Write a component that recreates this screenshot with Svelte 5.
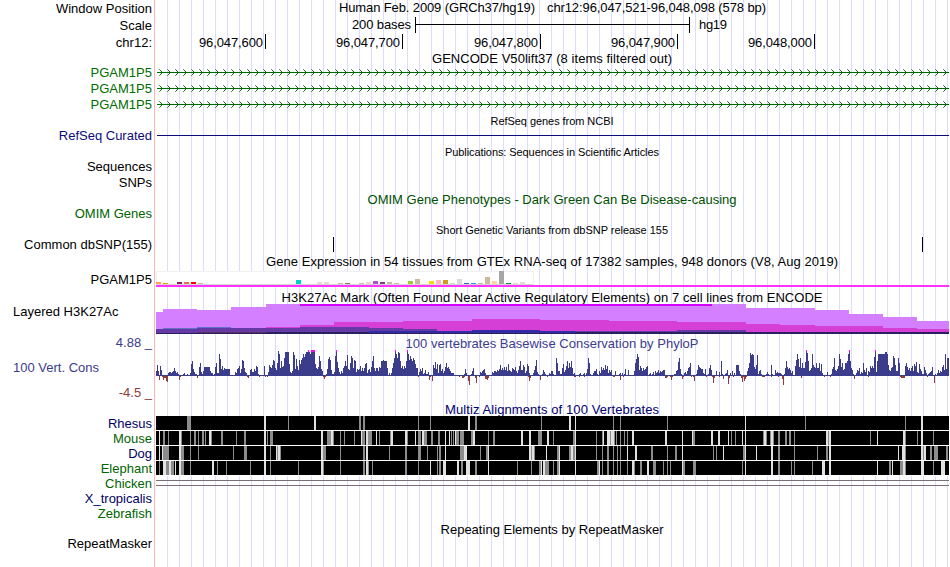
<script>
  const LEFT = 156
  const WIDTH = 793
  const RIGHT = LEFT + WIDTH

  const green = '#006400'
  const navy = '#0c0c78'
  const blue = '#3c3c8c'

  // heights add up from the top of the page, see layout()
  const tracks = layout([
    { h: 17, label: 'Window Position', kind: 'position' },
    { h: 17, label: 'Scale', kind: 'scale' },
    { h: 17, label: 'chr12:', kind: 'ruler' },
    { h: 13, title: 'GENCODE V50lift37 (8 items filtered out)', base: 63, len: 240 },
    { h: 16, line: 18, label: 'PGAM1P5', color: '#006e00', kind: 'gene' },
    { h: 16, line: 18, label: 'PGAM1P5', color: '#006e00', kind: 'gene' },
    { h: 16, line: 18, label: 'PGAM1P5', color: '#006e00', kind: 'gene' },
    { h: 15, title: 'RefSeq genes from NCBI', base: 125, len: 123, small: true },
    { h: 16, line: 18, label: 'RefSeq Curated', color: navy, kind: 'line' },
    { h: 16, title: 'Publications: Sequences in Scientific Articles', base: 156, len: 214, small: true },
    { h: 16, label: 'Sequences' },
    { h: 15, label: 'SNPs' },
    { h: 16, title: 'OMIM Gene Phenotypes - Dark Green Can Be Disease-causing', base: 204, len: 369, color: '#005000' },
    { h: 15, label: 'OMIM Genes', color: green },
    { h: 16, title: 'Short Genetic Variants from dbSNP release 155', base: 234, len: 232, small: true },
    { h: 15, label: 'Common dbSNP(155)', kind: 'snps' },
    { h: 19, title: 'Gene Expression in 54 tissues from GTEx RNA-seq of 17382 samples, 948 donors (V8, Aug 2019)', base: 266, len: 572 },
    { h: 17, label: 'PGAM1P5', kind: 'gtex' },
    { h: 15, title: 'H3K27Ac Mark (Often Found Near Active Regulatory Elements) on 7 cell lines from ENCODE', base: 302, len: 541 },
    { h: 32, line: 17, label: 'Layered H3K27Ac', kind: 'h3k', side: 'left' },
    { h: 15, label: '4.88 _', color: blue, title: '100 vertebrates Basewise Conservation by PhyloP', base: 348, len: 293 },
    { h: 35, label: '100 Vert. Cons', color: blue, kind: 'cons', side: 'left' },
    { h: 17, line: 15, label: '-4.5 _', color: '#8c3c3c' },
    { h: 14, title: 'Multiz Alignments of 100 Vertebrates', base: 414, len: 214, color: '#00006e' },
    { h: 15, label: 'Rhesus', color: '#000064', kind: 'align' },
    { h: 15, label: 'Mouse', color: green, kind: 'align' },
    { h: 15, label: 'Dog', color: '#000064', kind: 'align' },
    { h: 15, label: 'Elephant', color: green, kind: 'align' },
    { h: 15, label: 'Chicken', color: green, kind: 'gap' },
    { h: 15, label: 'X_tropicalis', color: '#000064' },
    { h: 15, label: 'Zebrafish', color: green },
    { h: 15, title: 'Repeating Elements by RepeatMasker', base: 534, len: 223 },
    { h: 15, label: 'RepeatMasker' }
  ])

  function layout(list) {
    let top = 0
    return list.map((t) => {
      const row = { label: '', side: 'right', color: '#000', line: t.h, ...t, top }
      top += t.h
      return row
    })
  }

  const ruler = [
    [265, '96,047,600'],
    [402, '96,047,700'],
    [540, '96,047,800'],
    [677, '96,047,900'],
    [814, '96,048,000']
  ]

  const arrows = Array.from({ length: 99 }, (_, i) => 159 + i * 8)

  // x, height, tissue colour
  const tissues = [
    [156, 2, '#ffa54f'], [163, 1, '#ee9a00'], [177, 2, '#8b1c62'], [184, 2, '#ee6a50'],
    [191, 2, '#ff0000'], [198, 1, '#cdb79e'], [296, 4, '#00cdcd'], [317, 2, '#eed5d2'],
    [324, 2, '#eed5d2'], [338, 1, '#cdb79e'], [345, 1, '#8b7355'], [359, 1, '#cdb79e'],
    [366, 2, '#eed5d2'], [373, 3, '#b452cd'], [380, 2, '#7a378b'], [387, 2, '#cdb79e'],
    [394, 1, '#cdb79e'], [408, 3, '#9acd32'], [415, 5, '#cdb79e'], [429, 3, '#ffd700'],
    [436, 4, '#ffb6c1'], [443, 4, '#cd9b1d'], [450, 1, '#b4eeb4'], [457, 5, '#d9d9d9'],
    [464, 1, '#3a5fcd'], [471, 1, '#1e90ff'], [478, 1, '#cdb79e'], [485, 7, '#cdb79e'],
    [492, 3, '#ffd39b'], [499, 13, '#a6a6a6'], [506, 1, '#008b45'], [513, 1, '#eed5d2'],
    [520, 2, '#eed5d2']
  ]

  // each layer is a list of steps: x where the step starts, y of its top
  const layers = [
    { fill: '#d47fff', steps: [[156, 312], [163, 309], [197, 310], [231, 307], [266, 304], [746, 308], [815, 310], [849, 314], [883, 317], [917, 321]] },
    { fill: '#d53fd5', steps: [[156, 333], [266, 327], [300, 325], [334, 322], [403, 321], [472, 319], [540, 320], [609, 321], [677, 322], [746, 324], [780, 325], [815, 326], [883, 328], [917, 329]] },
    { fill: '#5f72c4', steps: [[156, 333], [163, 328], [197, 327], [231, 333]] },
    { fill: '#653aa5', steps: [[156, 329], [197, 328], [231, 328], [266, 328], [300, 327], [369, 328], [403, 329], [437, 331], [609, 331], [677, 330], [746, 332]] },
    { fill: '#332aa5', steps: [[156, 333], [369, 331], [472, 330], [540, 331], [575, 333]] },
    { fill: '#2a2060', steps: [[156, 333], [197, 332], [369, 333], [575, 332]] }
  ]

  function stepPath(steps) {
    let d = `M${LEFT} 334`
    steps.forEach(([x, y], i) => {
      const next = i + 1 < steps.length ? steps[i + 1][0] : RIGHT
      d += `L${x} ${y}L${next} ${y}`
    })
    return d + `L${RIGHT} 334Z`
  }

  // one base-36 digit per pixel; q is a bar that goes past the top
  const chunks = [
    [156, '5b51a61111113443458534211112311211'],
    [190, '3cf7422119d42599999953312'],
    [214, '29d33mh7a687777711111437'],
    [238, '8a37gf843111674475a9211111a1113'],
    [268, '4b98bgf86dpm8f9aiooooc435ol7ha6gcgimjmooqomqqqqc8'],
    [317, '79kf75111'],
    [326, '27hjg6224kqe842538afal76dki8gf4767a58'],
    [363, '58cd36749fk858859'],
    [380, '8ffgfff813138diqmionf8a7a8fqmg'],
    [410, 'khfigc88147582362241111b8e7c3bc57359d89753331111111111273111'],
    [471, '25811111143567311111143554657b6869695c6548769536af66b935ca3111'],
    [532, '136ag4211126421113255211id55228c46af8d9f8231111231123111'],
    [586, '37id211355721539686b7a3646111511123131271161111'],
    [634, '5dhmj6a858679a12312415346354566111111111'],
    [674, '2256ei72113425'],
    [688, '89d1111126b98773271128b611115114'],
    [720, '1f2112361131513'],
    [735, '1bbb521111115'],
    [748, '8dnlml97bl25621111242'],
    [769, '11b2116343332'],
    [782, '1128f97863511'],
    [795, 'agmh9i8d88eqnf568mb98d88d5c31111411'],
    [830, '1279i657amh9d67ddfmqf8621136582'],
    [861, '43d64815'],
    [869, '4a8a8jq4fmmmmmmmoomb6589kib55id'],
    [900, '11111ad96858a5cae43c7522963'],
    [927, '123459112136354'],
    [942, '9b6m7ii']
  ]
  const heights = new Map(
    chunks.flatMap(([x, s]) => [...s].map((c, i) => [x + i, parseInt(c, 36)]))
  )

  const dips = [
    [159, 4], [162, 1], [163, 4], [164, 2], [165, 2], [166, 5], [167, 6], [179, 4], [180, 1],
    [197, 2], [247, 1], [248, 2], [259, 1], [265, 1], [267, 1], [323, 1], [324, 3], [325, 1],
    [418, 1], [429, 4], [430, 1], [432, 5], [459, 1], [462, 2], [463, 2], [464, 1], [468, 5],
    [469, 9], [475, 2], [476, 7], [479, 1], [485, 3], [486, 3], [487, 4], [488, 2], [528, 1],
    [529, 5], [530, 2], [540, 4], [547, 1], [574, 1], [575, 1], [579, 1], [584, 1], [613, 1],
    [614, 1], [620, 4], [623, 1], [665, 2], [666, 2], [667, 1], [670, 1], [671, 4], [672, 1],
    [682, 3], [683, 1], [691, 1], [693, 1], [694, 5], [706, 1], [712, 1], [713, 7], [714, 2],
    [719, 1], [723, 3], [728, 8], [729, 2], [733, 1], [741, 2], [742, 6], [743, 1], [744, 5],
    [745, 3], [746, 1], [762, 1], [763, 1], [764, 1], [771, 1], [778, 1], [782, 3], [783, 9],
    [801, 2], [824, 1], [830, 1], [854, 3], [868, 1], [900, 1], [901, 2], [902, 2], [903, 2],
    [904, 2], [927, 1], [934, 7]
  ]

  // x:width, then g (mismatch) or w (missing)
  const alignments = {
    Rhesus:
      '187:4g 264:2w 288:1g 314:2w 359:2g 363:2g 418:1g 430:1g 468:2w 475:2g 541:1g 569:2w 575:1w 613:1g 620:1g 667:1g 745:1w 805:1g 905:1g 921:2w',
    Mouse:
      '159:1w 163:2g 168:1g 179:2w 181:1g 190:1g 194:2g 198:1g 202:2g 205:1g 209:2w 211:1g 221:2g 236:1g 244:2g 264:2w 267:1g 270:3g 321:2w 327:4g 331:2w 333:1g 340:1g 344:1g 354:1g 361:1w 362:3g 366:2w 368:4g 376:1w 379:1g 390:1g 391:2w 405:2w 407:1g 415:1w 418:3g 422:2w 424:3g 431:2g 438:2g 445:1w 449:1w 451:1g 453:1g 455:1w 456:3g 460:4g 471:2g 473:2w 488:1g 493:2g 521:2w 529:2w 538:4g 547:2w 553:1g 573:2g 575:1w 596:1g 602:1g 603:1w 607:3w 610:1g 611:3w 614:1g 616:1g 620:1g 624:1g 627:1g 632:2w 665:2w 682:1w 692:1w 693:2g 711:2w 718:2w 728:1w 731:1g 735:1g 742:1w 745:1w 763:1g 764:2w 766:1g 770:1g 771:2w 773:1g 778:2g 785:2g 789:2g 794:1g 826:2w 828:1g 829:2w 870:1g 877:1w 903:2w 905:1g 917:1g 921:2w 933:1g',
    Dog:
      '159:1w 162:1w 163:6g 179:2w 181:3g 190:1g 198:1g 233:1g 244:3g 264:2w 270:1g 276:1w 277:1g 278:2w 280:1g 321:2w 323:3g 340:1g 363:2g 366:2w 389:1g 405:2g 418:3g 427:1g 437:1g 439:2g 445:1w 460:4g 464:3w 480:1g 486:2g 488:1w 529:2w 531:1g 532:2w 534:1g 546:1w 557:2g 559:1w 569:2g 571:2w 573:2g 575:1w 596:1g 602:1g 607:2g 613:1g 617:1g 620:1g 627:1w 635:2w 651:2g 667:1g 675:2g 682:1w 713:1g 716:1g 723:1w 743:2g 745:1w 756:1w 771:2w 778:2g 794:1g 817:1g 826:2g 829:2w 898:1w 902:3w 905:1g 921:2w 923:1g 924:2w 930:2g 934:4g 946:2g',
    Elephant:
      '159:1g 163:3w 166:3g 169:2w 171:3g 175:1w 179:2w 181:3g 190:1g 212:2w 217:1g 226:1g 250:1g 264:2w 270:1g 298:1g 321:2w 323:1g 340:1g 363:2g 366:2w 368:1g 372:1g 405:2g 418:1g 430:1w 437:1g 439:2g 443:3w 457:2w 461:2g 466:4w 475:2g 488:1w 517:1g 531:1g 539:2g 541:1w 543:2w 545:4g 553:1g 557:2g 559:1w 575:1w 597:2g 599:1w 602:1g 607:2g 613:1g 617:1g 620:1g 627:1g 632:2w 634:1g 640:2g 647:2w 653:3g 663:1g 667:1g 670:1g 682:1w 683:2g 693:3g 742:1g 745:1w 771:2w 778:2g 791:1g 794:1g 812:1g 822:3w 829:2w 877:1w 889:2g 892:1w 900:3g 903:2w 905:1g 921:3w 933:1g 941:4w'
  }

  function parseBlocks(text) {
    return text.split(' ').map((b) => {
      const [x, rest] = b.split(':')
      return { x: +x, w: parseInt(rest), fill: rest.endsWith('g') ? '#8c8c8c' : '#e1e1e1' }
    })
  }
</script>

<div class="browser">
  {#each tracks as t}
    <div class="track" style:height="{t.h}px">
      <div class="label {t.side}" style:color={t.color} style:line-height="{t.line}px">{t.label}</div>
      <svg width={WIDTH} height={t.h} viewBox="{LEFT} {t.top} {WIDTH} {t.h}">
        {#if t.title}
          <text class:small={t.small} x="552" y={t.base} text-anchor="middle" textLength={t.len} fill={t.color}>{t.title}</text>
        {/if}

        {#if t.kind === 'position'}
          <text x="339" y="12" textLength="196">Human Feb. 2009 (GRCh37/hg19)</text>
          <text x="547" y="12" textLength="219">chr12:96,047,521-96,048,098 (578 bp)</text>
        {:else if t.kind === 'scale'}
          <text x="352" y="29" textLength="59">200 bases</text>
          <path d="M415 17h1v7h273v-7h1v16h-1v-8h-273v8h-1z" />
          <text x="699" y="29" textLength="28">hg19</text>
        {:else if t.kind === 'ruler'}
          {#each ruler as [x, text]}
            <text x={x - 66} y="47" textLength="64">{text}</text>
            <rect {x} y="34" width="1" height="15" />
          {/each}
        {:else if t.kind === 'gene'}
          <rect x={LEFT + 1} y={t.top + 8} width={WIDTH - 1} height="1" fill={green} />
          {#each arrows as x}
            {#if x + 3 < RIGHT}
              <path class="tips" d="M{x} {t.top + 5}h1v1h-1zM{x} {t.top + 11}h1v1h-1z" />
              <path class="arrow" d="M{x + 1} {t.top + 6}h1v1h1v1h1v1h-1v1h-1v1h-1v-1h1v-1h1v-1h-1v-1h-1z" />
            {/if}
          {/each}
        {:else if t.kind === 'line'}
          <rect x={LEFT + 1} y="135" width={WIDTH - 1} height="1" fill={navy} />
        {:else if t.kind === 'snps'}
          <rect x="333" y="237" width="1" height="15" />
          <rect x="922" y="237" width="1" height="15" />
        {:else if t.kind === 'gtex'}
          <rect x="156.5" y="271.5" width="377" height="13" fill="#fff" stroke="#f0f0f0" />
          <rect x="156" y="284" width="377" height="1" fill="#d8d8d8" />
          {#each tissues as [x, h, fill]}
            <rect {x} y={284 - h} width="5" height={h} {fill} />
          {/each}
          <rect x={LEFT} y="285" width={WIDTH} height="2" fill="#ff33ff" />
        {:else if t.kind === 'h3k'}
          {#each layers as layer}
            <path d={stepPath(layer.steps)} fill={layer.fill} />
          {/each}
          <rect x="300" y="304" width="412" height="2" fill="#d400ff" />
          <rect x="197" y="332" width="69" height="1" fill="#5a2f60" />
        {:else if t.kind === 'cons'}
          {#each heights as [x, h]}
            <rect {x} y={376 - h} width="1" height={h} fill={blue} />
            {#if h === 26}
              <rect {x} y="350" width="1" height="2" fill="#ff00ff" />
            {/if}
          {/each}
          <rect x={LEFT} y="375" width={WIDTH} height="1" fill={blue} />
          {#each dips as [x, h]}
            <rect {x} y="376" width="1" height={h} fill="#8c3c3c" />
          {/each}
        {:else if t.kind === 'align'}
          <rect x={LEFT} y={t.top} width={WIDTH} height="15" fill="#fff" />
          <rect x={LEFT} y={t.top} width={WIDTH} height="14" />
          {#each parseBlocks(alignments[t.label]) as b}
            <rect x={b.x} y={t.top} width={b.w} height="14" fill={b.fill} />
          {/each}
        {:else if t.kind === 'gap'}
          <rect x={LEFT} y="480" width={WIDTH} height="1" fill="#786e78" />
          <rect x={LEFT} y="485" width={WIDTH} height="1" fill="#786e78" />
        {/if}
      </svg>
    </div>
  {/each}
</div>

<style>
  :global(body) {
    margin: 0;
    background: #fff;
  }

  .browser {
    box-sizing: border-box;
    width: 949px;
    height: 567px;
    overflow: hidden;
    font-family: 'Liberation Sans', Arial, Helvetica, sans-serif;
    font-size: 13px;
    /* separator line, then a guide line every 12px */
    background:
      linear-gradient(#ffb4b4, #ffb4b4) 154px 0 / 1px 100% no-repeat,
      repeating-linear-gradient(90deg, #dcdcff 0 1px, transparent 1px 12px) 167px 0 / 782px 100% no-repeat;
  }

  .track {
    display: flex;
  }

  .label {
    box-sizing: border-box;
    flex: none;
    width: 156px;
    padding-right: 4px;
    text-align: right;
    white-space: nowrap;
  }

  .label.left {
    padding-left: 13px;
    text-align: left;
  }

  svg {
    display: block;
    flex: none;
    overflow: visible;
  }

  rect,
  path {
    shape-rendering: crispEdges;
  }

  .small {
    font-size: 11px;
  }

  .arrow {
    fill: #006400;
  }

  .tips {
    fill: #5a9c5a;
  }
</style>
